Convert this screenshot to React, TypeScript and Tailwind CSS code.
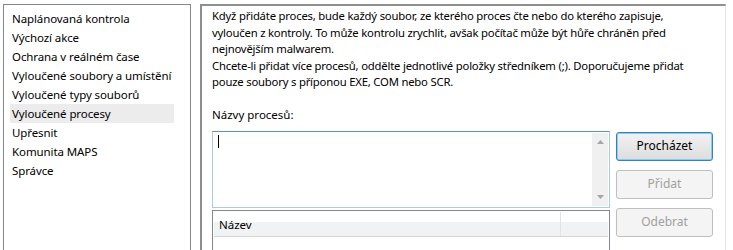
import React from 'react';

const items = [
  'Naplánovaná kontrola',
  'Výchozí akce',
  'Ochrana v reálném čase',
  'Vyloučené soubory a umístění',
  'Vyloučené typy souborů',
  'Vyloučené procesy',
  'Upřesnit',
  'Komunita MAPS',
  'Správce',
];

function Sidebar() {
  return (
    <div className="w-[188px] h-[260px] shrink-0 border border-[#828790] bg-white pt-[4px] pl-[6px] pr-[16px] tracking-[-0.1px] text-[11.5px]">
      {items.map((item) => (
        <div
          key={item}
          className={`h-[19px] leading-[19px] pl-[2px] whitespace-nowrap ${item === 'Vyloučené procesy' ? 'bg-[#ececec]' : ''}`}
        >
          {item}
        </div>
      ))}
    </div>
  );
}

function Button({ label, primary, disabled }: { label: string; primary?: boolean; disabled?: boolean }) {
  if (disabled) {
    return (
      <div className="h-[29px] w-[97px] flex items-center justify-center rounded-[3px] border border-[#bfbfbf] bg-[#f4f4f4] text-[#a0a0a0]">
        {label}
      </div>
    );
  }
  return (
    <div
      className={`h-[29px] w-[97px] flex items-center justify-center rounded-[3px] border bg-gradient-to-b from-[#f2f2f2] to-[#dddddd] text-black ${primary ? 'border-[#3c7fb1] shadow-[inset_0_0_0_1px_#7ed0f5]' : 'border-[#707070]'}`}
    >
      {label}
    </div>
  );
}

function ProcessInput() {
  return (
    <div className="h-[77px] w-[398px] border border-[#a9cbe8] border-t-[#5a93c7] bg-white flex">
      <div className="flex-1 pl-[5px] pt-[3px]">
        <div className="w-px h-[13px] bg-black" />
      </div>
      <div className="w-[16px] my-[1px] mr-[1px] bg-[#f0f0f0] flex flex-col justify-between items-center py-[7px]">
        <svg width="7" height="4" viewBox="0 0 7 4">
          <path d="M0 4 L3.5 0 L7 4 Z" fill="#a5a5a5" />
        </svg>
        <svg width="7" height="4" viewBox="0 0 7 4">
          <path d="M0 0 L3.5 4 L7 0 Z" fill="#a5a5a5" />
        </svg>
      </div>
    </div>
  );
}

function ProcessList() {
  return (
    <div className="h-[50px] w-[398px] border border-[#828790] bg-white p-[1px]">
      <div className="flex h-[25px] border-b border-[#d5d5d5] bg-gradient-to-b from-white from-40% to-[#f1f2f4] to-40%">
        <div className="w-[347px] pl-[5px] leading-[25px] border-r border-[#e2e3e5]">Název</div>
        <div className="flex-1" />
      </div>
    </div>
  );
}

export default function App() {
  return (
    <div
      className="w-[733px] h-[250px] overflow-hidden bg-white flex pt-[4px] pl-[3px] text-[11.5px] text-black"
      style={{ fontFamily: '"Noto Sans", "Open Sans", sans-serif' }}
    >
      <Sidebar />
      <div className="ml-[9px] w-[526px] h-[260px] border-t-2 border-l-2 border-[#8f8f8f] border-r border-r-[#e3e3e3] pl-[10px] pt-[2px]">
        <div className="leading-[16.6px] tracking-[-0.2px] text-[11.3px]">
          <div>Když přidáte proces, bude každý soubor, ze kterého proces čte nebo do kterého zapisuje,</div>
          <div>vyloučen z kontroly. To může kontrolu zrychlit, avšak počítač může být hůře chráněn před</div>
          <div>nejnovějším malwarem.</div>
          <div>Chcete-li přidat více procesů, oddělte jednotlivé položky středníkem (;). Doporučujeme přidat</div>
          <div>pouze soubory s příponou EXE, COM nebo SCR.</div>
        </div>
        <div className="mt-[16px] leading-[16px]">Názvy procesů:</div>
        <div className="mt-[8px] flex gap-[6px]">
          <div className="flex flex-col gap-[2px]">
            <ProcessInput />
            <ProcessList />
          </div>
          <div className="flex flex-col gap-[9px] pt-[1px] text-[12px]">
            <Button label="Procházet" primary />
            <Button label="Přidat" disabled />
            <Button label="Odebrat" disabled />
          </div>
        </div>
      </div>
    </div>
  );
}
